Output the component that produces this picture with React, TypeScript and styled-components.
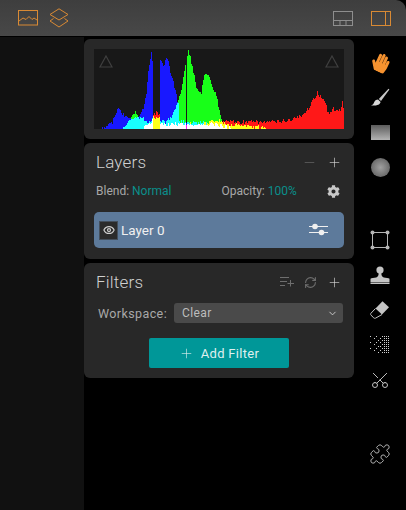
import React, { useMemo } from 'react'
import styled, { createGlobalStyle } from 'styled-components'
import { FaHandPaper, FaCog } from 'react-icons/fa'
import { Puzzle, Scissors, Eye, ChevronDown, Plus, Minus, RefreshCw } from 'lucide-react'

const Global = createGlobalStyle`
  html, body { margin: 0; padding: 0; background: #000; }
  body { font-family: Roboto, "Liberation Sans", sans-serif; }
`

const Screen = styled.div`
  width: 406px;
  height: 510px;
  overflow: hidden;
  display: flex;
  flex-direction: column;
  background: #000;
`

const TopBar = styled.header`
  height: 36px;
  flex: none;
  display: flex;
  align-items: center;
  justify-content: space-between;
  padding: 0 15px 0 18px;
  background: linear-gradient(#3e3e3e, #484848);
  border-top-right-radius: 10px;
`

const BarGroup = styled.div<{ $gap: number }>`
  display: flex;
  align-items: center;
  gap: ${p => p.$gap}px;
`

const Main = styled.div`
  flex: 1;
  display: flex;
  margin-top: 1px;
`

const LeftRail = styled.div`
  width: 84px;
  flex: none;
  background: #111;
`

const PanelColumn = styled.div`
  width: 270px;
  flex: none;
  display: flex;
  flex-direction: column;
  gap: 4px;
  padding-top: 2px;
`

const Panel = styled.section<{ $height: number }>`
  height: ${p => p.$height}px;
  box-sizing: border-box;
  background: #282828;
  border-radius: 6px;
  padding: 10px;
`

const HistoPlot = styled.div`
  width: 250px;
  height: 80px;
  position: relative;
  background: #181818;
  isolation: isolate;
`

const ClipMark = styled.svg<{ $side: 'left' | 'right' }>`
  position: absolute;
  top: 6px;
  ${p => p.$side}: 5px;
`

const Channel = styled.path`
  mix-blend-mode: screen;
`

const PanelHead = styled.div`
  display: flex;
  align-items: center;
  justify-content: space-between;
  height: 20px;
  padding: 0 2px;
  margin-top: -1px;
`

const PanelTitle = styled.h2`
  margin: 0;
  font-size: 17px;
  font-weight: 300;
  color: #d0d0d0;
  letter-spacing: 0.2px;
`

const HeadIcons = styled.div`
  display: flex;
  align-items: center;
  gap: 10px;
`

const BlendRow = styled.div`
  display: flex;
  align-items: center;
  height: 20px;
  margin-top: 9px;
  padding: 0 2px;
  font-size: 12px;
  color: #a8a8a8;
`

const Accent = styled.span`
  color: #0a8f8c;
  margin-left: 3px;
`

const OpacityLabel = styled.span`
  margin-left: 50px;
`

const GearSlot = styled.span`
  margin-left: auto;
  margin-right: 2px;
  display: flex;
  color: #c8c8c8;
  font-size: 13px;
`

const LayerRow = styled.div`
  height: 36px;
  margin-top: 11px;
  display: flex;
  align-items: center;
  padding: 0 16px 0 5px;
  background: #5d7a9b;
  border-radius: 5px;
  color: #f0f0f0;
  font-size: 13.5px;
`

const EyeBox = styled.span`
  width: 17px;
  height: 17px;
  display: flex;
  align-items: center;
  justify-content: center;
  background: #2b2b2b;
  border: 1px solid #444f5c;
  margin-right: 3px;
  color: #ccc;
`

const LayerName = styled.span`
  flex: 1;
`

const WorkspaceRow = styled.div`
  display: flex;
  align-items: center;
  height: 20px;
  margin-top: 11px;
  padding-left: 4px;
  font-size: 12.5px;
  letter-spacing: 0.4px;
  color: #a8a8a8;
`

const SelectBox = styled.div`
  width: 169px;
  height: 20px;
  margin-left: auto;
  margin-right: 1px;
  box-sizing: border-box;
  display: flex;
  align-items: center;
  justify-content: space-between;
  padding: 0 5px 0 8px;
  background: #4a4a4a;
  border-radius: 3px;
  font-size: 12px;
  color: #bdbdbd;
`

const AddButton = styled.button`
  display: flex;
  align-items: center;
  justify-content: center;
  gap: 7px;
  width: 140px;
  height: 30px;
  margin: 15px auto 0;
  padding: 0;
  border: 0;
  border-radius: 2px;
  background: #009798;
  color: #dff0ef;
  font: 400 13px Roboto, "Liberation Sans", sans-serif;
  letter-spacing: 0.3px;
`

const ToolRail = styled.div`
  flex: 1;
  display: flex;
  flex-direction: column;
  padding-top: 8px;
`

const ToolGroup = styled.div<{ $gap?: number }>`
  margin-top: ${p => p.$gap ?? 0}px;
`

const Tool = styled.div<{ $active?: boolean }>`
  height: 35px;
  display: flex;
  align-items: center;
  justify-content: center;
  color: ${p => (p.$active ? '#f5922f' : '#c0c0c0')};
`

const GradientSquare = styled.div`
  width: 19px;
  height: 15px;
  background: linear-gradient(#5c5c5c, #b4b4b4);
`

const Sphere = styled.div`
  width: 19px;
  height: 19px;
  border-radius: 50%;
  background: radial-gradient(circle at 50% 50%, #a0a0a0, #5c5c5c 90%);
`

type Pts = [number, number][]

const BLUE: Pts = [[100,129],[105,127],[112,122],[118,108],[122,114],[128,117],[133,118],[138,116],[143,108],[146,92],[148,70],[151,51],[152.9,72],[153,129],[159,129],[159.5,66],[160,60],[163,66],[165,60],[167,58],[170,72],[173,82],[176,95],[178,105],[179,122],[200,123],[220,125],[228,127],[232,129],[344,129]]
const GREEN: Pts = [[120,129],[124,127],[130,120],[135,112],[138,118],[142,118],[146,122],[150,122],[153,117],[159,117],[160,120],[165,122],[170,118],[175,108],[178,100],[180,95],[183,75],[186,60],[188,51],[190,58],[193,72],[196,88],[198,90],[201,92],[204,76],[206,73],[208,75],[211,85],[214,90],[217,100],[220,115],[222,122],[224,124],[240,125],[255,127],[262,128],[270,129],[344,129]]
const RED: Pts = [[143,129],[146,125],[150,124],[153,116],[156,112],[159,116],[160,124],[180,124],[200,124],[222,120],[240,122],[260,122],[275,122],[290,120],[300,116],[305,112],[310,105],[314,98],[317,92],[320,97],[325,103],[327,110],[330,113],[333,108],[336,112],[340,110],[342,102],[344,110]]

const noise = (x: number, seed: number) => {
  const v = Math.sin(x * 12.9898 + seed * 78.233) * 43758.5453
  return v - Math.floor(v) - 0.5
}

const channelPath = (pts: Pts, seed: number, gap?: number) => {
  let d = ''
  for (let x = 94; x < 344; x++) {
    let top = 129
    for (let i = 0; i < pts.length - 1; i++) {
      const [x0, y0] = pts[i]
      const [x1, y1] = pts[i + 1]
      if (x >= x0 && x <= x1) {
        top = y0 + ((y1 - y0) * (x - x0)) / (x1 - x0 || 1)
        break
      }
    }
    if (top < 128.5) top += noise(x, seed) * 4
    if (gap === x) top = 129
    d += `M${x - 94} ${Math.min(top, 129) - 49}h1V80h-1Z`
  }
  return d
}

const Histogram = () => {
  const paths = useMemo(
    () => ({
      red: channelPath(RED, 1),
      green: channelPath(GREEN, 2, 186),
      blue: channelPath(BLUE, 3),
    }),
    [],
  )
  return (
    <HistoPlot>
      <svg width="250" height="80" shapeRendering="crispEdges" style={{ display: 'block' }}>
        <Channel d={paths.blue} fill="#0000ff" />
        <Channel d={paths.green} fill="#00ff00" />
        <Channel d={paths.red} fill="#ff0000" />
      </svg>
      <ClipMark $side="left" width="14" height="13" viewBox="0 0 14 13" fill="none" stroke="#3f3f3f" strokeWidth="1.2">
        <path d="M7 1 13 12H1Z" />
      </ClipMark>
      <ClipMark $side="right" width="14" height="13" viewBox="0 0 14 13" fill="none" stroke="#3f3f3f" strokeWidth="1.2">
        <path d="M7 1 13 12H1Z" />
      </ClipMark>
    </HistoPlot>
  )
}

const ORANGE = '#d98a34'
const GREY = '#8e8e8e'

const ImageIcon = () => (
  <svg width="20" height="16" viewBox="0 0 20 16" fill="none" stroke={ORANGE}>
    <rect x="0.5" y="0.5" width="19" height="14.5" />
    <path d="M1 11 5 8l3 1.5L11 6.5l3 3 2-1.5 3 2" />
  </svg>
)

const StackIcon = () => (
  <svg width="20" height="20" viewBox="0 0 20 20" fill="none" stroke={ORANGE}>
    <path d="M10 .8 19 6.5 10 12 1 6.5Z" />
    <path d="M4.5 10.5 1 13l9 6 9-6-3.5-2.5" />
  </svg>
)

const LayoutIcon = () => (
  <svg width="20" height="15" viewBox="0 0 20 15" fill="none" stroke={GREY}>
    <rect x="0.5" y="0.5" width="19" height="14" />
    <path d="M1 9.5h18M7 9.5V14M13 9.5V14" />
  </svg>
)

const SidePanelIcon = () => (
  <svg width="20" height="15" viewBox="0 0 20 15" fill="none" stroke={ORANGE}>
    <rect x="0.5" y="0.5" width="19" height="14" />
    <path d="M14.5 1v13" />
  </svg>
)

const BrushIcon = () => (
  <svg width="20" height="20" viewBox="0 0 20 20" fill="#c8c8c8">
    <path d="M18.5.8 19.4 1.6 11 13 8.8 11Z" />
    <path d="M8 11.6 10.6 14c-.6 2.6-3 3.8-9.6 3.6 2.6-1 2.4-2 3.4-3.8.8-1.4 2.2-2.2 3.6-2.2Z" fill="#d8d8d8" />
  </svg>
)

const CropIcon = () => (
  <svg width="20" height="20" viewBox="0 0 20 20" fill="none" stroke="#b4b4b4" strokeWidth="1">
    <rect x="2.5" y="2.5" width="15" height="15" />
    <g fill="#b4b4b4" stroke="none">
      <circle cx="2.5" cy="2.5" r="2" />
      <circle cx="17.5" cy="2.5" r="2" />
      <circle cx="2.5" cy="17.5" r="2" />
      <circle cx="17.5" cy="17.5" r="2" />
    </g>
  </svg>
)

const StampIcon = () => (
  <svg width="20" height="18" viewBox="0 0 20 18" fill="#c4c4c4">
    <circle cx="10" cy="4" r="3.6" />
    <path d="M8.6 7h2.8c0 2.5.4 3.6 2.4 4.4 2 .6 5 .4 5.7 1.4V16H.5v-3.2c.7-1 3.7-.8 5.7-1.4 2-.8 2.4-1.9 2.4-4.4Z" />
    <rect x="0.5" y="16.5" width="19" height="1.5" />
  </svg>
)

const EraserIcon = () => (
  <svg width="20" height="20" viewBox="0 0 20 20">
    <path d="M12.5 1.2 19 7.2 12 14.5 5.5 8.5Z" fill="#c4c4c4" />
    <path d="M5.5 8.5 1 13.2c-.6.7-.5 1.4 0 2l2.8 2.7c.6.5 1.4.6 2 .1L12 14.5" fill="none" stroke="#c4c4c4" />
  </svg>
)

const DitherIcon = () => {
  const dots = useMemo(() => {
    const list: { x: number; y: number }[] = []
    for (let y = 0; y < 9; y++) {
      for (let x = 0; x < 10; x++) {
        const keep = x >= 7 || (x >= 5 && (x + y) % 2 === 0) || (x >= 2 && x < 5 && (x + y) % 3 === 0) || (x < 2 && x === 0 && y % 3 === 0)
        if (keep) list.push({ x: x * 2, y: y * 2 })
      }
    }
    return list
  }, [])
  return (
    <svg width="20" height="18" viewBox="0 0 20 18" fill="#cfcfcf" shapeRendering="crispEdges">
      {dots.map(d => (
        <rect key={`${d.x}-${d.y}`} x={d.x} y={d.y} width="1" height="1" />
      ))}
    </svg>
  )
}

const StackPlusIcon = () => (
  <svg width="14" height="10" viewBox="0 0 14 10" fill="none" stroke="#6e6e6e">
    <path d="M0 .5h9M0 4.5h7M0 8.5h5M10.5 3v6.5M7.5 6.5h6.5" />
  </svg>
)

const SlidersIcon = () => (
  <svg width="19" height="14" viewBox="0 0 19 14" fill="#f0f0f0">
    <rect x="0" y="3" width="19" height="1" />
    <rect x="0" y="9" width="19" height="1" />
    <circle cx="6" cy="3.5" r="2.8" />
    <circle cx="12.5" cy="9.5" r="2.8" />
  </svg>
)

export default function App() {
  return (
    <Screen>
      <Global />
      <TopBar>
        <BarGroup $gap={11}>
          <ImageIcon />
          <StackIcon />
        </BarGroup>
        <BarGroup $gap={18}>
          <LayoutIcon />
          <SidePanelIcon />
        </BarGroup>
      </TopBar>
      <Main>
        <LeftRail />
        <PanelColumn>
          <Panel $height={100}>
            <Histogram />
          </Panel>
          <Panel $height={116}>
            <PanelHead>
              <PanelTitle>Layers</PanelTitle>
              <HeadIcons>
                <Minus size={15} strokeWidth={1} color="#6e6e6e" />
                <Plus size={15} strokeWidth={1} color="#dcdcdc" />
              </HeadIcons>
            </PanelHead>
            <BlendRow>
              Blend:<Accent>Normal</Accent>
              <OpacityLabel>Opacity:</OpacityLabel>
              <Accent>100%</Accent>
              <GearSlot>
                <FaCog />
              </GearSlot>
            </BlendRow>
            <LayerRow>
              <EyeBox>
                <Eye size={12} strokeWidth={2.5} />
              </EyeBox>
              <LayerName>Layer 0</LayerName>
              <SlidersIcon />
            </LayerRow>
          </Panel>
          <Panel $height={115}>
            <PanelHead>
              <PanelTitle>Filters</PanelTitle>
              <HeadIcons>
                <StackPlusIcon />
                <RefreshCw size={13} strokeWidth={2} color="#6e6e6e" />
                <Plus size={15} strokeWidth={1} color="#dcdcdc" />
              </HeadIcons>
            </PanelHead>
            <WorkspaceRow>
              Workspace:
              <SelectBox>
                Clear
                <ChevronDown size={11} strokeWidth={2} color="#d0d0d0" />
              </SelectBox>
            </WorkspaceRow>
            <AddButton>
              <Plus size={15} strokeWidth={1} />
              Add Filter
            </AddButton>
          </Panel>
        </PanelColumn>
        <ToolRail>
          <ToolGroup>
            <Tool $active>
              <FaHandPaper size={19} style={{ transform: 'rotate(25deg)' }} />
            </Tool>
            <Tool>
              <BrushIcon />
            </Tool>
            <Tool>
              <GradientSquare />
            </Tool>
            <Tool>
              <Sphere />
            </Tool>
          </ToolGroup>
          <ToolGroup $gap={37}>
            <Tool>
              <CropIcon />
            </Tool>
            <Tool>
              <StampIcon />
            </Tool>
            <Tool>
              <EraserIcon />
            </Tool>
            <Tool>
              <DitherIcon />
            </Tool>
            <Tool>
              <Scissors size={20} strokeWidth={1.2} style={{ transform: 'rotate(90deg) scaleX(-1)' }} />
            </Tool>
          </ToolGroup>
          <ToolGroup $gap={39}>
            <Tool>
              <Puzzle size={22} strokeWidth={1} />
            </Tool>
          </ToolGroup>
        </ToolRail>
      </Main>
    </Screen>
  )
}
